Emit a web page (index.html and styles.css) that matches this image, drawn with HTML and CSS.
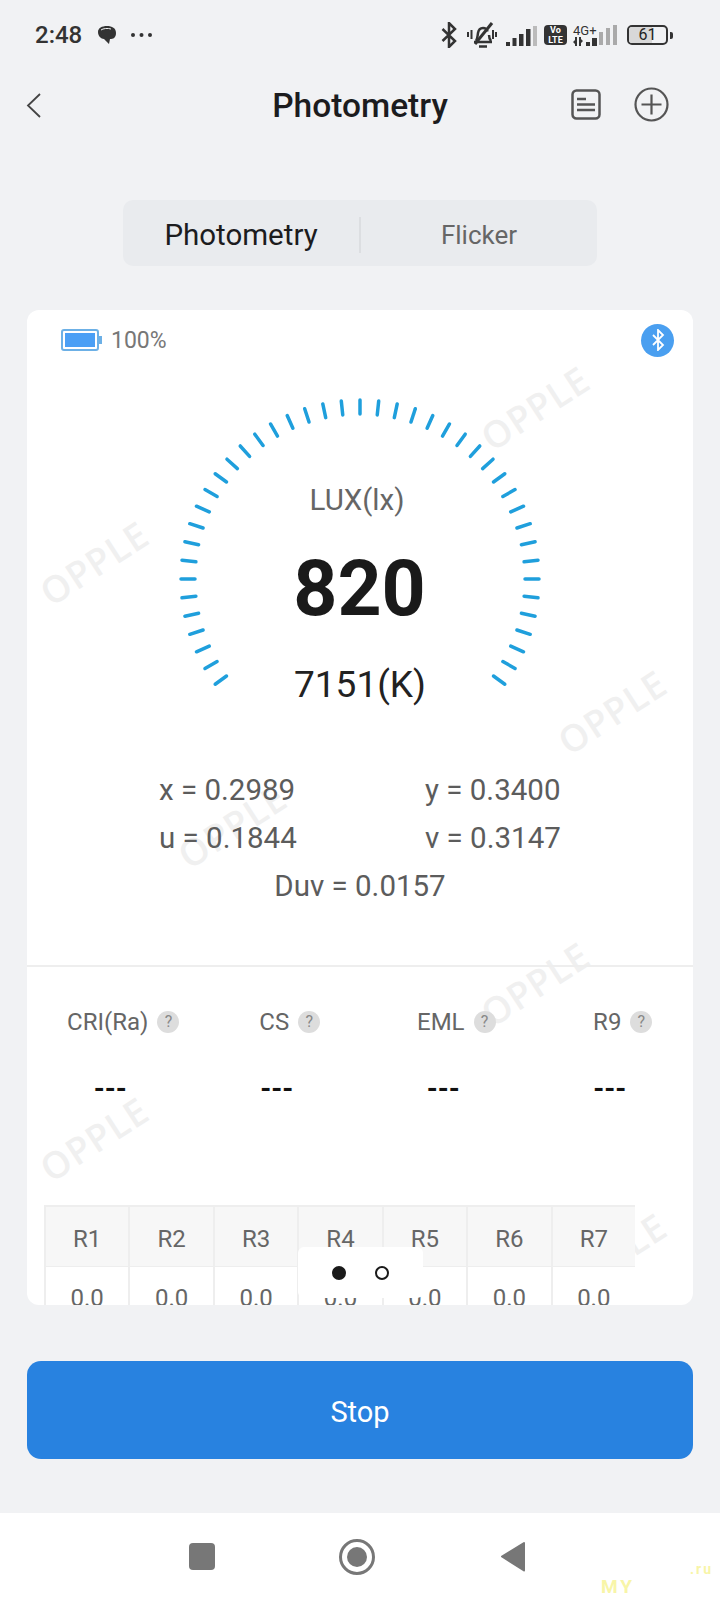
FILE: index.html
```html
<!DOCTYPE html>
<html lang="en">
<head>
    <meta charset="UTF-8">
    <meta name="viewport" content="width=device-width, initial-scale=1.0">
    <title>Photometry</title>
    <link rel="stylesheet" href="styles.css">
</head>
<body>
    <div class="page">
        <!-- status bar -->
        <div class="status">
            <span class="time">2:48</span>
            <svg class="bubble" width="20" height="20" viewBox="0 0 20 20"><path d="M1 7C1 3 5 1 10 1s9 2 9 7-3 6-6 6l-1 5-5-5C4 14 1 11 1 7z" fill="#333"/><path d="M4 5c2-1.600 7-2 10-1" stroke="#f1f2f4" stroke-width="1" fill="none"/></svg>
            <svg class="more" width="21" height="4" viewBox="0 0 21 4"><circle cx="2" cy="2" r="2" fill="#333"/><circle cx="10.500" cy="2" r="2" fill="#333"/><circle cx="19" cy="2" r="2" fill="#333"/></svg>
            <div class="status-right">
                <svg width="16" height="26" viewBox="0 0 16 26"><polyline points="1.500,7 14,19 8,25 8,1 14,7 1.500,19" fill="none" stroke="#333" stroke-width="2.500"/></svg>
                <svg class="st-bell" width="30" height="26" viewBox="0 0 30 26">
                    <path d="M9 19c1.500-2 1.500-5 2-8 .5-3 2-5 5-5 2 0 4 1 4.500 3.500M22 13c0 2 .5 4 2 6" fill="none" stroke="#333" stroke-width="2.500"/>
                    <path d="M7 20h18M12 24.500h8" stroke="#333" stroke-width="2.500"/>
                    <path d="M25 1L8 22" stroke="#333" stroke-width="3"/>
                    <path d="M1 10v5M4.500 8v9M26 8v9M29 10v5" stroke="#333" stroke-width="2"/>
                </svg>
                <svg class="st-bars" width="31" height="20" viewBox="0 0 31 20">
                    <rect x="0" y="16" width="4" height="4" fill="#333"/><rect x="6.500" y="12" width="4" height="8" fill="#333"/><rect x="13" y="8" width="4.500" height="12" fill="#333"/><rect x="20" y="3" width="4.500" height="17" fill="#333"/><rect x="27" y="0" width="4" height="20" fill="#bbb"/>
                </svg>
                <div class="volte">Vo<br>LTE</div>
                <div class="net">
                    <span class="net-label">4G+</span>
                    <svg width="25" height="9" viewBox="0 0 25 9"><path d="M3 0v9M7 0v9" stroke="#333" stroke-width="2"/><path d="M0 5l3-3v6zM10 4l-3-3v6z" fill="#333"/><rect x="13" y="5" width="4" height="4" fill="#333"/><rect x="19" y="1" width="5" height="8" fill="#333"/></svg>
                </div>
                <svg class="st-bars2" width="18" height="20" viewBox="0 0 18 20"><rect x="0" y="7" width="4" height="13" fill="#aaa"/><rect x="7" y="3" width="4" height="17" fill="#aaa"/><rect x="14" y="0" width="4" height="20" fill="#aaa"/></svg>
                <div class="phone-batt"><span class="phone-batt-fill"></span><span class="phone-batt-num">61</span></div>
                <span class="phone-batt-nub"></span>
            </div>
        </div>

        <!-- title bar -->
        <div class="header">
            <svg class="back" width="15" height="25" viewBox="0 0 15 25"><polyline points="14,1 2,12.500 14,24" fill="none" stroke="#444" stroke-width="1.800"/></svg>
            <h1>Photometry</h1>
            <div class="header-icons">
                <svg width="30" height="31" viewBox="0 0 30 31"><rect x="1.500" y="1.500" width="27" height="28" rx="4" fill="none" stroke="#555" stroke-width="2.500"/><path d="M6 10h9M6 15.500h18M6 21h18" stroke="#555" stroke-width="2.500"/></svg>
                <svg width="35" height="35" viewBox="0 0 35 35"><circle cx="17.500" cy="17.500" r="16" fill="none" stroke="#555" stroke-width="2.200"/><path d="M17.500 7.500v20M7.500 17.500h20" stroke="#555" stroke-width="2.200"/></svg>
            </div>
        </div>

        <div class="tabs">
            <div class="tab tab-on">Photometry</div>
            <div class="tab">Flicker</div>
        </div>

        <div class="card">
            <!-- faint OPPLE marks behind the content -->
            <span class="wm wm1">OPPLE</span>
            <span class="wm wm2">OPPLE</span>
            <span class="wm wm3">OPPLE</span>
            <span class="wm wm4">OPPLE</span>
            <span class="wm wm5">OPPLE</span>
            <span class="wm wm6">OPPLE</span>
            <span class="wm wm7">OPPLE</span>

            <div class="card-body">
                <div class="card-top">
                    <div class="batt"><span class="batt-fill"></span></div>
                    <span class="batt-text">100%</span>
                    <div class="bt-dot">
                        <svg width="14" height="22" viewBox="0 0 14 22"><polyline points="2,6 12,16 7,21 7,1 12,6 2,16" fill="none" stroke="#fff" stroke-width="1.800"/></svg>
                    </div>
                </div>

                <div class="gauge">
                    <svg class="ticks" width="364" height="300" viewBox="-182 -182 364 300">
                        <defs><line id="t" x1="0" y1="-179" x2="0" y2="-165" stroke="#1f9fdc" stroke-width="3.500" stroke-linecap="round"/></defs>
                        <use href="#t" transform="rotate(-126)"/><use href="#t" transform="rotate(-120)"/><use href="#t" transform="rotate(-114)"/>
                        <use href="#t" transform="rotate(-108)"/><use href="#t" transform="rotate(-102)"/><use href="#t" transform="rotate(-96)"/>
                        <use href="#t" transform="rotate(-90)"/><use href="#t" transform="rotate(-84)"/><use href="#t" transform="rotate(-78)"/>
                        <use href="#t" transform="rotate(-72)"/><use href="#t" transform="rotate(-66)"/><use href="#t" transform="rotate(-60)"/>
                        <use href="#t" transform="rotate(-54)"/><use href="#t" transform="rotate(-48)"/><use href="#t" transform="rotate(-42)"/>
                        <use href="#t" transform="rotate(-36)"/><use href="#t" transform="rotate(-30)"/><use href="#t" transform="rotate(-24)"/>
                        <use href="#t" transform="rotate(-18)"/><use href="#t" transform="rotate(-12)"/><use href="#t" transform="rotate(-6)"/>
                        <use href="#t"/>
                        <use href="#t" transform="rotate(6)"/><use href="#t" transform="rotate(12)"/><use href="#t" transform="rotate(18)"/>
                        <use href="#t" transform="rotate(24)"/><use href="#t" transform="rotate(30)"/><use href="#t" transform="rotate(36)"/>
                        <use href="#t" transform="rotate(42)"/><use href="#t" transform="rotate(48)"/><use href="#t" transform="rotate(54)"/>
                        <use href="#t" transform="rotate(60)"/><use href="#t" transform="rotate(66)"/><use href="#t" transform="rotate(72)"/>
                        <use href="#t" transform="rotate(78)"/><use href="#t" transform="rotate(84)"/><use href="#t" transform="rotate(90)"/>
                        <use href="#t" transform="rotate(96)"/><use href="#t" transform="rotate(102)"/><use href="#t" transform="rotate(108)"/>
                        <use href="#t" transform="rotate(114)"/><use href="#t" transform="rotate(120)"/><use href="#t" transform="rotate(126)"/>
                    </svg>
                    <div class="lux-label">LUX(lx)</div>
                    <div class="lux-value">820</div>
                    <div class="cct">7151(K)</div>
                </div>

                <div class="coords">
                    <span>x = 0.2989</span><span>y = 0.3400</span>
                    <span>u = 0.1844</span><span>v = 0.3147</span>
                    <span class="duv">Duv = 0.0157</span>
                </div>

                <div class="metrics">
                    <div class="metric"><div class="metric-name">CRI(Ra)<i class="help">?</i></div><div class="metric-val">---</div></div>
                    <div class="metric"><div class="metric-name">CS<i class="help">?</i></div><div class="metric-val">---</div></div>
                    <div class="metric"><div class="metric-name">EML<i class="help">?</i></div><div class="metric-val">---</div></div>
                    <div class="metric"><div class="metric-name">R9<i class="help">?</i></div><div class="metric-val">---</div></div>
                </div>

                <div class="rtable">
                    <div class="rhead">R1</div><div class="rhead">R2</div><div class="rhead">R3</div><div class="rhead">R4</div><div class="rhead">R5</div><div class="rhead">R6</div><div class="rhead">R7</div>
                    <div class="rcell">0.0</div><div class="rcell">0.0</div><div class="rcell">0.0</div><div class="rcell">0.0</div><div class="rcell">0.0</div><div class="rcell">0.0</div><div class="rcell">0.0</div>
                </div>
            </div>

            <div class="pager"><span class="dot dot-on"></span><span class="dot"></span></div>
        </div>

        <button class="stop">Stop</button>

        <div class="navbar">
            <span class="nav-square"></span>
            <span class="nav-circle"><span class="nav-circle-in"></span></span>
            <svg class="nav-back" width="25" height="31" viewBox="0 0 25 31"><path d="M24 2L2 15.500 24 29.500z" fill="#777" stroke="#777" stroke-width="2" stroke-linejoin="round"/></svg>
            <span class="site-my">MY</span>
            <span class="site-ru">.ru</span>
        </div>
    </div>
</body>
</html>
```

FILE: styles.css
```css
* {
    box-sizing: border-box;
}
body {
    margin: 0;
    background: #f1f2f4;
    font-family: Roboto, "Liberation Sans", sans-serif;
}
.page {
    width: 720px;
    height: 1600px;
    overflow: hidden;
    display: flex;
    flex-direction: column;
    align-items: center;
}

/* status bar */
.status {
    width: 100%;
    height: 70px;
    padding: 0 47px 0 35px;
    display: flex;
    align-items: center;
    color: #333;
}
.time {
    font-size: 24px;
    font-weight: 500;
    width: 47px;
}
.bubble {
    margin-left: 15px;
}
.more {
    margin-left: 14px;
}
.status-right {
    margin-left: auto;
    display: flex;
    align-items: center;
}
.st-bell {
    margin-left: 10px;
}
.st-bars {
    margin-left: 9px;
    margin-top: 2px;
}
.volte {
    margin-left: 7px;
    width: 23px;
    height: 20px;
    border-radius: 4px;
    background: #333;
    color: #fff;
    font-size: 9px;
    font-weight: 700;
    line-height: 9.500px;
    text-align: center;
    padding-top: 1px;
}
.net {
    margin-left: 6px;
    width: 26px;
    display: flex;
    flex-direction: column;
}
.net-label {
    font-size: 13px;
    line-height: 12px;
}
.phone-batt {
    margin-left: 10px;
    width: 41px;
    height: 20px;
    border: 2px solid #333;
    border-radius: 5px;
    position: relative;
    overflow: hidden;
}
.phone-batt-fill {
    display: block;
    width: 61%;
    height: 100%;
    background: #d8d8d8;
}
.phone-batt-num {
    position: absolute;
    top: 0;
    left: 0;
    width: 100%;
    font-size: 16px;
    line-height: 16px;
    text-align: center;
    color: #222;
}
.phone-batt-nub {
    margin-left: 2px;
    width: 3px;
    height: 7px;
    background: #333;
    border-radius: 0 2px 2px 0;
}

/* title bar */
.header {
    width: 100%;
    height: 70px;
    display: grid;
    grid-template-columns: 1fr auto 1fr;
    align-items: center;
}
.back {
    margin: 1px 0 0 26px;
}
h1 {
    margin: 0;
    font-size: 33.500px;
    font-weight: 500;
    color: #1c1c1e;
}
.header-icons {
    display: flex;
    justify-content: flex-end;
    align-items: center;
    gap: 33px;
    margin-top: -2px;
    padding-right: 51px;
}

.tabs {
    margin-top: 60px;
    width: 474px;
    height: 66px;
    background: #e9ebee;
    border-radius: 10px;
    display: flex;
    align-items: center;
    padding-top: 3px;
}
.tab {
    flex: 1;
    text-align: center;
    font-size: 26px;
    color: #666;
}
.tab-on {
    font-size: 29.500px;
    color: #1c1c1e;
    border-right: 2px solid #dcdee1;
    line-height: 36px;
}

/* main card */
.card {
    margin-top: 44px;
    width: 666px;
    height: 995px;
    background: #fff;
    border-radius: 12px;
    overflow: hidden;
    position: relative;
}
.card-body {
    position: relative;
    z-index: 1;
}
.card-top {
    height: 60px;
    padding: 0 19px 0 34px;
    display: flex;
    align-items: center;
}
.batt {
    width: 38px;
    height: 22px;
    border: 2px solid #6cb0e6;
    border-radius: 3px;
    padding: 2px;
    position: relative;
}
.batt::after {
    content: "";
    position: absolute;
    right: -5px;
    top: 5px;
    width: 3px;
    height: 8px;
    background: #6cb0e6;
}
.batt-fill {
    display: block;
    height: 100%;
    background: #4a9ff5;
}
.batt-text {
    margin-left: 12px;
    font-size: 23px;
    color: #777;
}
.bt-dot {
    margin-left: auto;
    width: 33px;
    height: 33px;
    border-radius: 50%;
    background: #4a9ff0;
    display: flex;
    align-items: center;
    justify-content: center;
}

.gauge {
    position: relative;
    height: 340px;
    padding-top: 110px;
    text-align: center;
}
.ticks {
    position: absolute;
    top: 27px;
    left: 151px;
}
.lux-label {
    font-size: 29.500px;
    line-height: 40px;
    padding-right: 6px;
    color: #666;
}
.lux-value {
    margin-top: 24px;
    padding-right: 1px;
    font-size: 77px;
    font-weight: 700;
    line-height: 90px;
    color: #1a1a1a;
}
.cct {
    margin-top: 26px;
    font-size: 37px;
    line-height: 50px;
    color: #222;
}

.coords {
    margin-top: 56px;
    padding-left: 132px;
    display: grid;
    grid-template-columns: 266px 1fr;
    font-size: 29.500px;
    line-height: 48px;
    color: #5c5c5c;
}
.duv {
    grid-column: 1 / 3;
    margin-left: -132px;
    text-align: center;
}

.metrics {
    margin-top: 55px;
    border-top: 2px solid #eeeeee;
    padding-top: 35px;
    display: grid;
    grid-template-columns: repeat(4, 1fr);
}
.metric {
    text-align: center;
}
.metric-name {
    display: inline-block;
    position: relative;
    margin-right: 5px;
    white-space: nowrap;
    font-size: 24px;
    line-height: 40px;
    color: #666;
}
.help {
    position: absolute;
    left: 100%;
    top: 9px;
    margin-left: 9px;
    width: 22px;
    height: 22px;
    border-radius: 50%;
    background: #dddddd;
    color: #888;
    font-size: 16px;
    font-style: normal;
    line-height: 22px;
}
.metric-val {
    margin-top: 27px;
    font-size: 28px;
    font-weight: 700;
    line-height: 40px;
    color: #111;
}

.rtable {
    margin: 96px 0 0 17px;
    width: 591px;
    display: grid;
    grid-template-columns: repeat(7, 1fr);
    border-top: 2px solid #eeeeee;
    font-size: 24px;
    color: #666;
    text-align: center;
}
.rhead {
    height: 60px;
    line-height: 64px;
    background: #f7f7f7;
    border-left: 2px solid #eeeeee;
    border-bottom: 1px solid #eeeeee;
}
.rcell {
    height: 60px;
    line-height: 62px;
    background: #fff;
    border-left: 2px solid #eeeeee;
}

/* watermark */
.wm {
    position: absolute;
    width: 160px;
    margin: -25px 0 0 -80px;
    text-align: center;
    font-family: "Open Sans", sans-serif;
    font-size: 37px;
    font-weight: 600;
    line-height: 50px;
    letter-spacing: 1px;
    color: #f0f0f0;
    transform: rotate(-33deg);
}
.wm1 { left: 67px; top: 253px; }
.wm2 { left: 508px; top: 98px; }
.wm3 { left: 585px; top: 402px; }
.wm4 { left: 205px; top: 516px; }
.wm5 { left: 508px; top: 674px; }
.wm6 { left: 67px; top: 829px; }
.wm7 { left: 585px; top: 945px; }

.pager {
    position: absolute;
    z-index: 2;
    left: 271px;
    bottom: 7px;
    width: 125px;
    height: 51px;
    background: #fff;
    border-radius: 6px;
    display: flex;
    align-items: center;
    justify-content: center;
    gap: 29px;
}
.dot {
    width: 14px;
    height: 14px;
    border-radius: 50%;
    border: 2px solid #1a1a1a;
}
.dot-on {
    background: #1a1a1a;
}

.stop {
    margin-top: 56px;
    width: 666px;
    height: 98px;
    flex: none;
    border: none;
    border-radius: 14px;
    background: #2882e0;
    color: #fff;
    font-family: inherit;
    font-size: 29px;
    padding-top: 5px;
}

/* android nav */
.navbar {
    margin-top: 54px;
    width: 100%;
    height: 87px;
    flex: none;
    background: #fff;
    position: relative;
    display: flex;
    align-items: center;
    padding-left: 189px;
}
.nav-square {
    width: 26px;
    height: 27px;
    border-radius: 4px;
    background: #777;
}
.nav-circle {
    margin-left: 124px;
    width: 36px;
    height: 36px;
    border-radius: 50%;
    border: 3px solid #777;
    display: flex;
    align-items: center;
    justify-content: center;
}
.nav-circle-in {
    width: 20px;
    height: 20px;
    border-radius: 50%;
    background: #777;
}
.nav-back {
    margin-left: 125px;
}
.site-my {
    position: absolute;
    left: 601px;
    top: 62px;
    font-size: 19px;
    font-weight: 700;
    letter-spacing: 3px;
    color: #f8f5a8;
}
.site-ru {
    position: absolute;
    left: 690px;
    top: 48px;
    font-size: 14px;
    font-weight: 700;
    letter-spacing: 2px;
    color: #f8f5a8;
}
```
